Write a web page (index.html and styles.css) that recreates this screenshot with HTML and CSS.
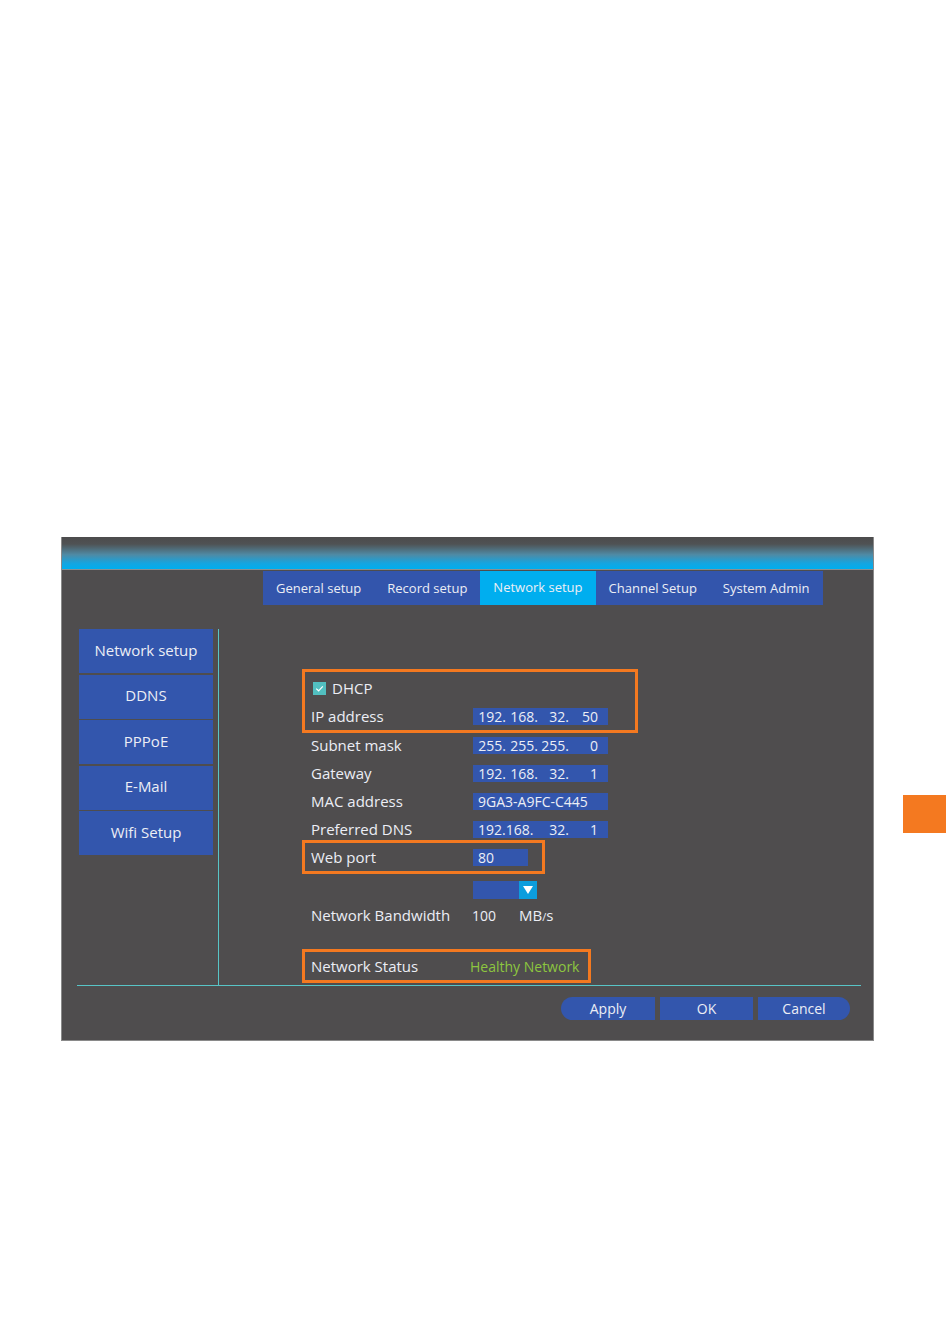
FILE: index.html
```html
<!DOCTYPE html>
<html lang="en">

<head>
    <meta charset="UTF-8">
    <title>Network setup</title>
    <link rel="stylesheet" href="styles.css">
</head>

<body>
    <div class="page">
        <div class="panel">
            <div class="header"></div>

            <!-- abas do topo -->
            <div class="tabs">
                <div class="tab">General setup</div>
                <div class="tab">Record setup</div>
                <div class="tab active">Network setup</div>
                <div class="tab">Channel Setup</div>
                <div class="tab">System Admin</div>
            </div>

            <div class="main">
                <div class="side">
                    <div class="side-item">Network setup</div>
                    <div class="side-item">DDNS</div>
                    <div class="side-item">PPPoE</div>
                    <div class="side-item">E-Mail</div>
                    <div class="side-item">Wifi Setup</div>
                </div>

                <div class="content">
                    <div class="box box-ip">
                        <div class="row">
                            <span class="check">
                                <svg width="13" height="13" viewBox="0 0 13 13"><path d="M3.2 6.6 L5.6 8.8 L9.8 4.4" fill="none" stroke="#fff" stroke-width="1.2"/></svg>
                            </span>
                            DHCP
                        </div>
                        <div class="row">
                            <span class="label">IP address</span>
                            <span class="value ip"><span>192.</span><span>168.</span><span>32.</span><span>50</span></span>
                        </div>
                    </div>
                    <div class="row">
                        <span class="label">Subnet mask</span>
                        <span class="value ip"><span>255.</span><span>255.</span><span>255.</span><span>0</span></span>
                    </div>
                    <div class="row">
                        <span class="label">Gateway</span>
                        <span class="value ip"><span>192.</span><span>168.</span><span>32.</span><span>1</span></span>
                    </div>
                    <div class="row">
                        <span class="label">MAC address</span>
                        <span class="value text">9GA3-A9FC-C445</span>
                    </div>
                    <div class="row">
                        <span class="label">Preferred DNS</span>
                        <span class="value ip"><span class="wide">192.168.</span><span>32.</span><span>1</span></span>
                    </div>
                    <div class="box box-port">
                        <div class="row">
                            <span class="label">Web port</span>
                            <span class="value text port">80</span>
                        </div>
                    </div>

                    <div class="dropdown">
                        <span class="dropdown-field"></span>
                        <span class="dropdown-arrow"></span>
                    </div>

                    <div class="row">
                        <span class="label">Network Bandwidth</span>
                        <span class="speed">100</span>
                        <span>MB<span class="slash">/</span>s</span>
                    </div>

                    <div class="box box-status">
                        <div class="row">
                            <span class="label status-label">Network Status</span>
                            <span class="healthy">Healthy Network</span>
                        </div>
                    </div>
                </div>
            </div>

            <div class="actions">
                <button class="btn btn-first">Apply</button>
                <button class="btn">OK</button>
                <button class="btn btn-last">Cancel</button>
            </div>
        </div>

        <div class="marker"></div>
    </div>
</body>

</html>
```

FILE: styles.css
```css
body {
    margin: 0;
    background: #fff;
    font-family: "Open Sans", "Noto Sans", sans-serif;
    color: #eceef5;
}

.page {
    display: flex;
    align-items: flex-start;
    padding: 537px 0 0 61px;
}

.panel {
    width: 813px;
    height: 504px;
    box-sizing: border-box;
    background: #4f4d4e;
    border: 1px solid #8a8a8a;
    border-top: none;
}

.marker {
    width: 43px;
    height: 38px;
    margin: 258px 0 0 29px;
    background: #f47920;
}

.header {
    height: 32px;
    background: linear-gradient(to bottom, #4c4b4c 0%, #4f5254 22%, #4f8aa4 55%, #15a5e0 82%, #00aeef 100%);
    border-bottom: 1px solid #8a8f92;
}

.tabs {
    display: flex;
    width: fit-content;
    margin: 1px 0 0 201px;
    background: #3355ac;
}

.tab {
    padding: 0 13px;
    line-height: 34px;
    font-size: 13px;
}

.tab.active {
    background: #00aeef;
    line-height: 32px;
    padding-bottom: 2px;
}

.main {
    display: flex;
    width: 784px;
    margin: 24px 0 0 15px;
    border-bottom: 1px solid #58c5c7;
}

.side {
    display: flex;
    flex-direction: column;
    gap: 1.5px;
    width: 134px;
    margin-left: 2px;
}

.side-item {
    height: 44px;
    box-sizing: border-box;
    padding-bottom: 3px;
    display: flex;
    align-items: center;
    justify-content: center;
    background: #3356ad;
    font-size: 15px;
}

.content {
    flex: 1;
    margin-left: 5px;
    padding: 40px 0 2px 83px;
    border-left: 1px solid #58c5c7;
}

.row {
    display: flex;
    align-items: center;
    height: 28px;
    padding-left: 9px;
    font-size: 15px;
}

.box {
    box-sizing: border-box;
    border: 3px solid #f47920;
}

.box .row {
    padding-left: 6px;
}

.box-ip {
    width: 336px;
    padding-top: 2px;
    margin-bottom: -2px;
}

.box-port {
    width: 243px;
    margin-top: -3px;
}

.box-status {
    width: 289px;
    margin-top: 20px;
}

.label {
    width: 162px;
    flex-shrink: 0;
}

.status-label {
    width: 159px;
}

.check {
    display: inline-block;
    width: 13px;
    height: 13px;
    margin: 0 6px 0 2px;
    background: #52bfc0;
}

.check svg {
    display: block;
}

.value {
    width: 135px;
    height: 17px;
    line-height: 17px;
    background: #3356ad;
    font-size: 14px;
}

.ip {
    display: grid;
    grid-template-columns: 33px 32px 31px 29px;
}

.ip span {
    text-align: right;
}

.ip .wide {
    grid-column: 1 / 3;
    text-align: left;
    padding-left: 5px;
}

.text {
    padding-left: 5px;
    box-sizing: border-box;
}

.port {
    width: 55px;
}

.dropdown {
    display: flex;
    width: 64px;
    height: 18px;
    margin: 7px 0 2px 171px;
}

.dropdown-field {
    flex: 1;
    background: #3356ad;
}

.dropdown-arrow {
    width: 18px;
    display: flex;
    align-items: center;
    justify-content: center;
    background: #0c9ddd;
}

.dropdown-arrow::after {
    content: "";
    border-left: 5px solid transparent;
    border-right: 5px solid transparent;
    border-top: 8px solid #fff;
}

.speed {
    width: 47px;
    font-size: 14px;
    margin-left: -1px;
}

.slash {
    font-size: 11px;
}

.healthy {
    color: #8dc63f;
    font-size: 14px;
}

.actions {
    display: flex;
    justify-content: flex-end;
    gap: 5px;
    margin: 11px 23px 0 0;
}

.btn {
    width: 93px;
    height: 23px;
    padding: 0;
    border: none;
    background: #3356ad;
    color: #eceef5;
    font-family: "Open Sans", "Noto Sans", sans-serif;
    font-size: 14px;
}

.btn-first {
    width: 94px;
    border-radius: 12px 0 0 12px;
}

.btn-last {
    width: 92px;
    border-radius: 0 12px 12px 0;
}
```
